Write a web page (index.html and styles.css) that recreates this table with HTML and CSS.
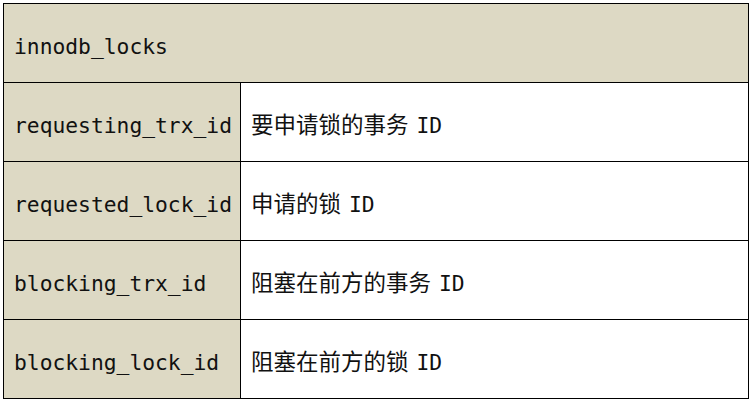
FILE: index.html
```html
<!DOCTYPE html>
<html lang="zh-CN">
<head>
<meta charset="utf-8">
<link rel="stylesheet" href="styles.css">
</head>
<body>
<table class="tbl">
  <tr><td class="head" colspan="2"><span class="mono">innodb_locks</span></td></tr>
  <tr><td class="key"><span class="mono">requesting_trx_id</span></td><td class="val">要申请锁的事务 <span class="mono">ID</span></td></tr>
  <tr><td class="key"><span class="mono">requested_lock_id</span></td><td class="val">申请的锁 <span class="mono">ID</span></td></tr>
  <tr><td class="key"><span class="mono">blocking_trx_id</span></td><td class="val">阻塞在前方的事务 <span class="mono">ID</span></td></tr>
  <tr><td class="key"><span class="mono">blocking_lock_id</span></td><td class="val">阻塞在前方的锁 <span class="mono">ID</span></td></tr>
</table>
</body>
</html>
```
FILE: styles.css
```css
html, body { margin: 0; padding: 0; background: #fff; }
body { padding: 3px; }
.tbl {
  border-collapse: collapse;
  width: 746px;
  font-family: "Noto Sans CJK SC", sans-serif;
  font-size: 22.5px;
  color: #111;
}
.tbl td {
  border: 1.5px solid #000;
  height: 79px;
  padding: 1px 0 0 10px;
  vertical-align: middle;
  box-sizing: border-box;
}
.head, .key { background: #ddd9c4; }
.key { width: 237px; }
.mono { font-family: "DejaVu Sans Mono", monospace; font-size: 21.3px; }
.val { padding-left: 11px; word-spacing: 3px; }
```
